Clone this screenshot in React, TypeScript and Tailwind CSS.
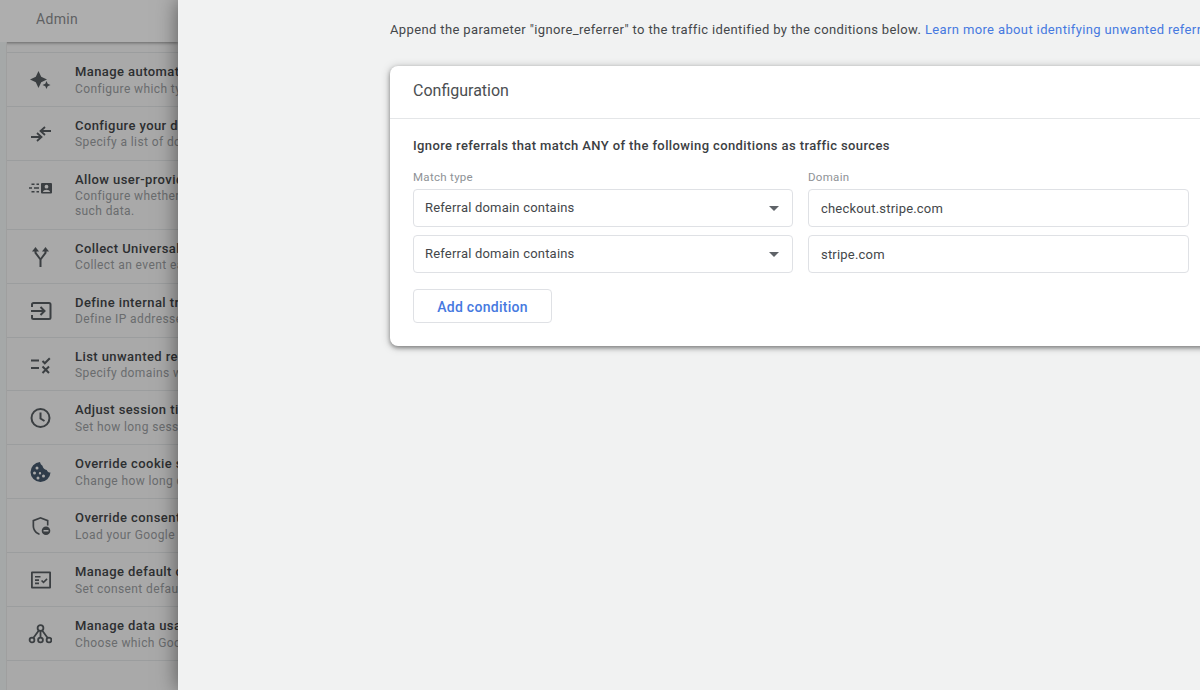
import type { ReactNode } from 'react';

interface Row {
    title: string;
    desc: string;
    extra?: string;
    icon: ReactNode;
}

const filled = 'h-6 w-6 fill-[#3b3f42]';
const stroked = 'h-6 w-6 fill-none stroke-[#3b3f42] stroke-[1.8]';

const rows: Row[] = [
    {
        title: 'Manage automatic event detection',
        desc: 'Configure which types of automatic events',
        icon: (
            <svg viewBox="0 0 24 24" className={filled}>
                <path d="M10.500 3l2.700 5.800 5.800 2.700-5.800 2.700-2.700 5.800-2.700-5.800-5.800-2.700 5.800-2.700z" />
                <path d="M18.500 13l1.200 2.800 2.800 1.200-2.800 1.200-1.200 2.800-1.200-2.800-2.800-1.200 2.800-1.200z" />
            </svg>
        ),
    },
    {
        title: 'Configure your domains',
        desc: 'Specify a list of domains for cross-domain',
        icon: (
            <svg viewBox="0 0 24 24" className={stroked}>
                <path d="M23 9H13M17 5l-4.500 4 4.500 4" />
                <path d="M3 15h10M9 11l4.500 4-4.500 4" />
            </svg>
        ),
    },
    {
        title: 'Allow user-provided data capabilities',
        desc: 'Configure whether to allow collection of',
        extra: 'such data.',
        icon: (
            <svg viewBox="0 0 24 24" className={filled}>
                <path d="M1 11.300h3v1.400H1zM6 11.300h5v1.400H6zM3.500 7.500h3v1.400h-3zM8.500 7.500h2.500v1.400H8.500zM3.500 15h3v1.400h-3zM8.500 15h2.500v1.400H8.500z" />
                <path
                    fillRule="evenodd"
                    d="M14 7h9a1 1 0 0 1 1 1v8.500a1 1 0 0 1-1 1h-9a1 1 0 0 1-1-1V8a1 1 0 0 1 1-1zM18.500 8.800a1.900 1.900 0 1 0 0 3.800 1.900 1.900 0 0 0 0-3.800zM15 16h7c0-1.500-2-2.200-3.500-2.200S15 14.500 15 16z"
                />
            </svg>
        ),
    },
    {
        title: 'Collect Universal Analytics events',
        desc: 'Collect an event each time a gtag call',
        icon: (
            <svg viewBox="0 0 24 24" className={filled}>
                <path d="M7.500 2l3.500 4.500H4z" />
                <path d="M17.500 2l3.500 4.500h-7z" />
                <path d="M6.500 6h2v1.500l4 5.500 4-5.500V6h2v2.200l-5 6.500V22h-2v-7.300l-5-6.500z" />
            </svg>
        ),
    },
    {
        title: 'Define internal traffic',
        desc: 'Define IP addresses that should be internal',
        icon: (
            <svg viewBox="0 0 24 24" className="h-6 w-6 fill-none stroke-[#3b3f42] stroke-2">
                <path d="M4 8V5.500A1.500 1.500 0 0 1 5.500 4h15.500A1.500 1.500 0 0 1 22.500 5.500V18.500A1.500 1.500 0 0 1 21 20H5.500A1.500 1.500 0 0 1 4 18.500V16" />
                <path d="M3 12h13M12.500 8l4 4-4 4" />
            </svg>
        ),
    },
    {
        title: 'List unwanted referrals',
        desc: 'Specify domains whose traffic should be',
        icon: (
            <svg viewBox="0 0 24 24" className="h-6 w-6 fill-none stroke-[#3b3f42] stroke-2">
                <path d="M3 7.500h8M3 15h8" />
                <path d="M14.500 8l2.300 2.300 5-5" />
                <path d="M14.500 13.500l6.500 6.500M21 13.500L14.500 20" />
            </svg>
        ),
    },
    {
        title: 'Adjust session timeout',
        desc: 'Set how long sessions can last',
        icon: (
            <svg viewBox="0 0 24 24" className="h-6 w-6 fill-none stroke-[#3b3f42] stroke-2">
                <circle cx="12.500" cy="12" r="9" />
                <path d="M12.500 6.500V12.500L16.500 15" />
            </svg>
        ),
    },
    {
        title: 'Override cookie settings',
        desc: 'Change how long cookies last',
        icon: (
            <svg viewBox="0 0 24 24" className="h-6 w-6 fill-[#2f3c4a]">
                <path
                    fillRule="evenodd"
                    d="M12 2a10 10 0 1 0 10.500 10.500c-1.800 0-3.300-1-3.800-2.600-2.200-.2-4-2-4.200-4.200C13.200 5 12.200 3.500 12 2zM9 6.500a1.500 1.500 0 1 1 0 3 1.500 1.500 0 0 1 0-3zM6.500 11.500a1.500 1.500 0 1 1 0 3 1.500 1.500 0 0 1 0-3zM12 12a1.200 1.200 0 1 1 0 2.400 1.200 1.200 0 0 1 0-2.400zM15.500 14.500a1.500 1.500 0 1 1 0 3 1.500 1.500 0 0 1 0-3zM10 16.500a1.500 1.500 0 1 1 0 3 1.500 1.500 0 0 1 0-3z"
                />
            </svg>
        ),
    },
    {
        title: 'Override consent settings',
        desc: 'Load your Google tags before consent',
        icon: (
            <svg viewBox="0 0 24 24" className={filled}>
                <path d="M12.500 3l8 3v5.500h-1.600V7.200l-6.400-2.400-6.300 2.400V12c0 3.400 2.400 6.300 5.300 7.300v1.700C7.600 20.200 4.500 16.300 4.500 12V6z" />
                <path
                    fillRule="evenodd"
                    d="M18 12.500a4.300 4.300 0 1 1 0 8.600 4.300 4.300 0 0 1 0-8.600zM15.500 16v1.500h5V16z"
                />
            </svg>
        ),
    },
    {
        title: 'Manage default consent settings',
        desc: 'Set consent defaults for your regions',
        icon: (
            <svg viewBox="0 0 24 24" className={filled}>
                <path
                    fillRule="evenodd"
                    d="M4 3.500h18a1 1 0 0 1 1 1v15a1 1 0 0 1-1 1H4a1 1 0 0 1-1-1v-15a1 1 0 0 1 1-1zM4.800 5.300v13.400h16.400V5.300z"
                />
                <path d="M7 8h5.500v1.600H7zM7 11.300h4v1.600H7zM7 14.600h4v1.600H7zM13 13l1.100-1.100 1.400 1.400 3-3 1.100 1.100-4.100 4.100z" />
            </svg>
        ),
    },
    {
        title: 'Manage data usage',
        desc: 'Choose which Google services can use data',
        icon: (
            <svg viewBox="0 0 24 24" className={stroked}>
                <circle cx="12.500" cy="6" r="2.900" />
                <circle cx="4" cy="18" r="2.400" />
                <circle cx="12.500" cy="18" r="2.400" />
                <circle cx="21" cy="18" r="2.400" />
                <path d="M12.500 9v6.600M10.800 8.500L5.300 16M14.200 8.500L19.700 16" />
            </svg>
        ),
    },
];

function SettingRow({ row }: { row: Row }) {
    return (
        <div className={`flex border-b border-[#9b9d9e] pl-[21px] ${row.extra ? 'h-[69px]' : 'h-[53.900px]'}`}>
            <div className="flex h-[54px] w-6 shrink-0 items-center justify-center">{row.icon}</div>
            <div className="ml-[23px] pt-[10px] whitespace-nowrap">
                <div className="text-[13px] leading-[18px] font-medium tracking-[0.42px] text-[#2d2f31]">
                    {row.title}
                </div>
                <div className="mt-[-0.5px] text-[12px] leading-[16px] tracking-[0.4px] text-[#6a6c6e]">{row.desc}</div>
                {row.extra && (
                    <div className="text-[12px] leading-[15px] tracking-[0.4px] text-[#6a6c6e]">{row.extra}</div>
                )}
            </div>
        </div>
    );
}

function SelectBox() {
    return (
        <div className="flex h-[38px] items-center justify-between rounded border border-[#dfe1e5] bg-white pr-[13px] pl-[11px] text-[13px] tracking-[0.2px] text-[#44474a]">
            <span>Referral domain contains</span>
            <span className="h-0 w-0 border-x-[5px] border-t-[5px] border-x-transparent border-t-[#5f6368]" />
        </div>
    );
}

function TextBox({ value }: { value: string }) {
    return (
        <div className="flex h-[38px] items-center rounded border border-[#dfe1e5] bg-white pt-[1px] pl-3 text-[13px] tracking-[0.2px] text-[#44474a]">
            {value}
        </div>
    );
}

export default function App() {
    return (
        <div className="flex h-[690px] w-[1200px] overflow-hidden bg-[#a9a9a9] font-['Roboto',sans-serif]">
            <aside className="flex w-[178px] shrink-0 flex-col overflow-hidden bg-[#a9a9a9]">
                <header className="flex h-[42px] shrink-0 items-center bg-[#aeaeae] pb-1 pl-9 text-[14px] tracking-[0.3px] text-[#5f6163] shadow-[0_1px_3px_rgba(0,0,0,0.4)]">
                    Admin
                </header>
                <div className="flex flex-1">
                    <div className="w-[6px] shrink-0 bg-[#a5a8a8]" />
                    <div className="flex-1 border-l border-[#9f9f9f] pt-[10px]">
                        <div className="border-t border-[#9b9d9e]">
                            {rows.map((row) => (
                                <SettingRow key={row.title} row={row} />
                            ))}
                        </div>
                    </div>
                </div>
            </aside>
            <main className="relative min-w-0 flex-1 bg-[#f1f2f2] pl-[212px] shadow-[0_0_20px_rgba(0,0,0,0.5)]">
                <p className="pt-[21px] text-[13px] leading-[18px] tracking-[0.37px] whitespace-nowrap text-[#44474a]">
                    Append the parameter "ignore_referrer" to the traffic identified by the conditions below.{' '}
                    <span className="text-[#4679e0]">Learn more about identifying unwanted referrals</span>
                </p>
                <section className="mt-[27px] w-[830px] rounded-lg bg-white shadow-[0_1px_10px_rgba(0,0,0,0.22),0_2px_4px_rgba(0,0,0,0.38)]">
                    <h2 className="flex h-[53px] items-center border-b border-[#e4e6e8] pb-[2px] pl-[23px] text-[16px] text-[#4b4e51]">
                        Configuration
                    </h2>
                    <div className="pt-[17px] pr-[11px] pb-[23px] pl-[23px]">
                        <h3 className="text-[13px] leading-[20px] font-medium tracking-[0.39px] text-[#3c4043]">
                            Ignore referrals that match ANY of the following conditions as traffic sources
                        </h3>
                        <div className="mt-[12px] grid grid-cols-[380px_381px] gap-x-[15px]">
                            <div className="text-[11.500px] leading-[18px] tracking-[0.3px] text-[#8e9296]">Match type</div>
                            <div className="text-[11.500px] leading-[18px] tracking-[0.3px] text-[#8e9296]">Domain</div>
                        </div>
                        <div className="grid grid-cols-[380px_381px] gap-x-[15px] gap-y-2 pt-[3px]">
                            <SelectBox />
                            <TextBox value="checkout.stripe.com" />
                            <SelectBox />
                            <TextBox value="stripe.com" />
                        </div>
                        <button className="mt-4 h-[34px] w-[139px] rounded border border-[#dfe1e5] bg-white pt-[2px] text-[14px] font-medium tracking-[0.28px] text-[#4679e0]">
                            Add condition
                        </button>
                    </div>
                </section>
            </main>
        </div>
    );
}
